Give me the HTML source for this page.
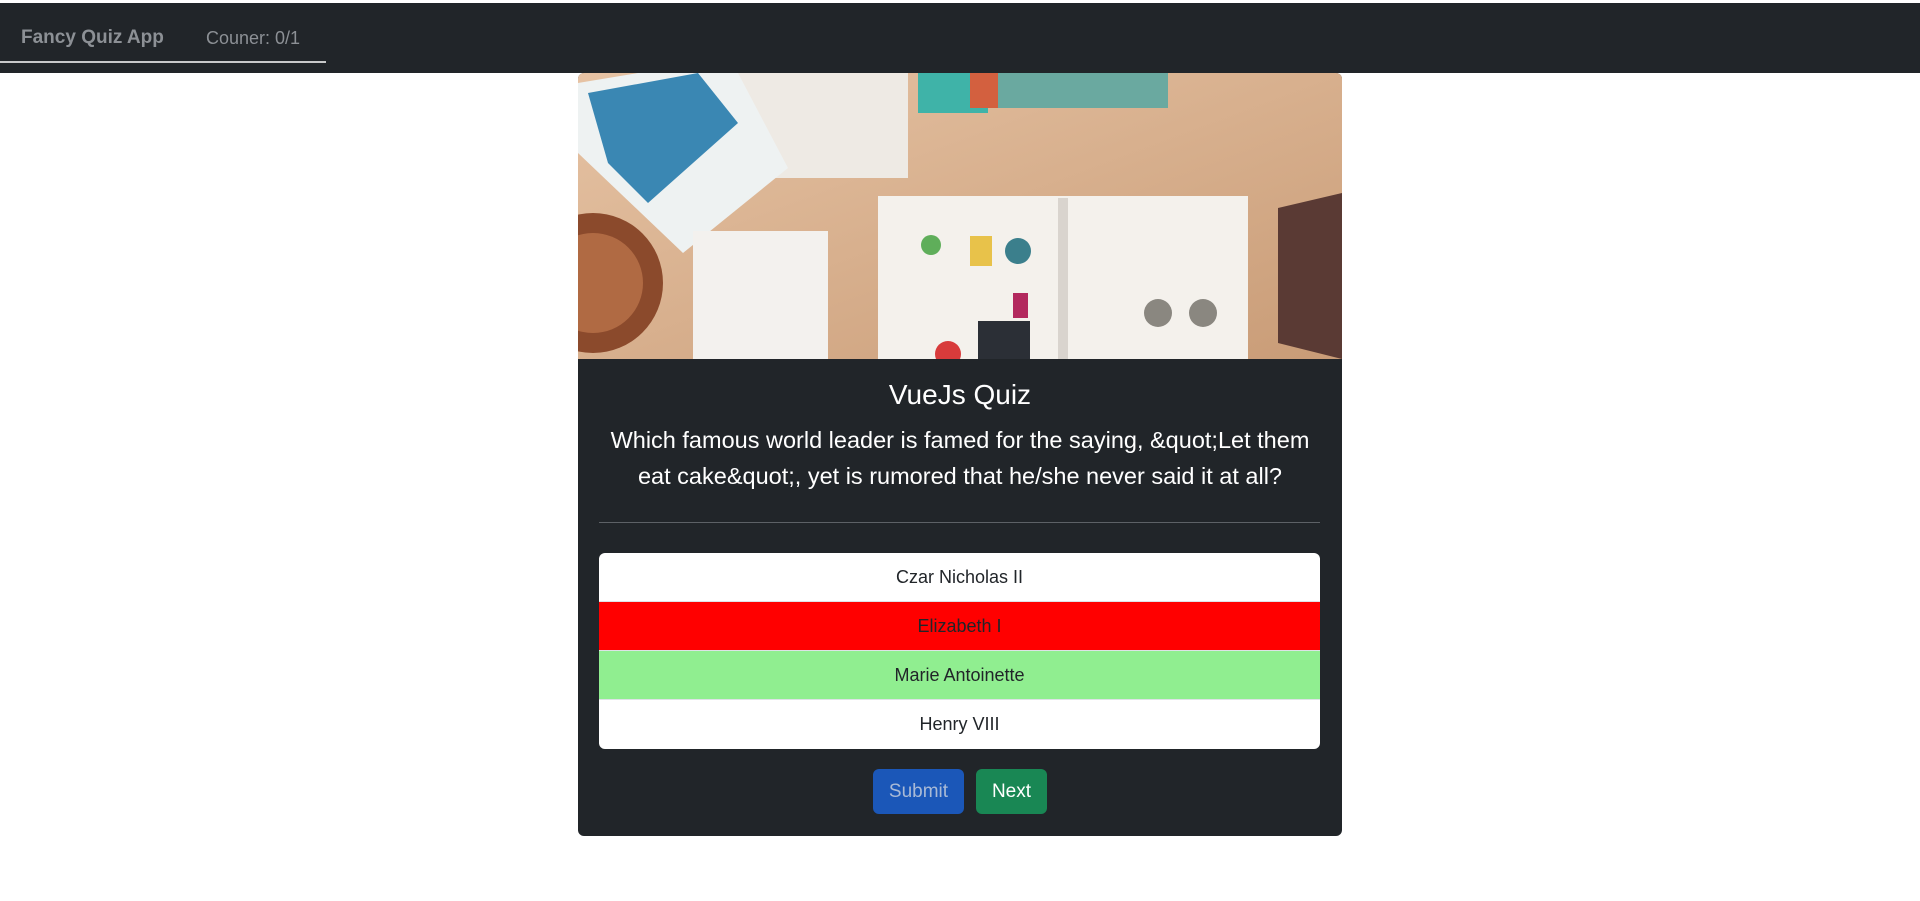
<!DOCTYPE html>
<html><head><meta charset="utf-8">
<style>
*{box-sizing:border-box;margin:0;padding:0}
body{width:1920px;height:901px;background:#fff;font-family:"Liberation Sans",Arial,sans-serif;position:relative;overflow:hidden}
.nav{position:absolute;left:0;top:3px;width:1920px;height:70px;background:#212529}
.brand{position:absolute;left:21px;top:24px;font-size:19px;font-weight:bold;color:#8c9095}
.cnt{position:absolute;left:206px;top:25px;font-size:18px;color:#8c9095}
.ul{position:absolute;left:0;top:58px;width:326px;height:2px;background:#c8c9ca}
.card{position:absolute;left:578px;top:73px;width:764px;height:763px;background:#212529;border-radius:6px;overflow:hidden}
.img{position:absolute;left:0;top:0;width:764px;height:286px}
.title{position:absolute;top:306px;width:100%;text-align:center;color:#fff;font-size:28px}
.q{position:absolute;top:349px;left:24px;right:24px;text-align:center;color:#fff;font-size:23.5px;line-height:36px}
.hr{position:absolute;left:21px;right:22px;top:449px;height:1px;background:#5d6166}
.list{position:absolute;left:21px;right:22px;top:480px;border-radius:6px;overflow:hidden}
.it{height:49px;line-height:49px;text-align:center;font-size:18px;color:#212529;background:#fff;border-bottom:1px solid #dee2e6}
.it:last-child{border-bottom:none}
.btn{position:absolute;top:696px;height:45px;line-height:45px;border-radius:6px;font-size:19px;text-align:center}
</style></head><body>
<div class="nav"><div class="brand">Fancy Quiz App</div><div class="cnt">Couner: 0/1</div><div class="ul"></div></div>
<div class="card">
<svg class="img" viewBox="0 0 764 286" preserveAspectRatio="none">
<defs><linearGradient id="w" x1="0" y1="0" x2="1" y2="1"><stop offset="0" stop-color="#e6c3a4"/><stop offset="1" stop-color="#c99c77"/></linearGradient></defs>
<rect width="764" height="286" fill="url(#w)"/>
<rect x="130" y="0" width="200" height="105" fill="#eeeae4"/>
<rect x="340" y="0" width="70" height="40" fill="#3fb3a8"/>
<rect x="392" y="0" width="40" height="35" fill="#d3603f"/>
<rect x="420" y="0" width="170" height="35" fill="#6aa9a0"/>
<polygon points="0,10 60,0 160,0 210,95 105,180 0,80" fill="#eef2f2"/>
<polygon points="10,20 120,0 160,50 70,130 30,90" fill="#3a87b3"/>
<rect x="300" y="123" width="370" height="163" fill="#f4f1ec"/>
<rect x="480" y="125" width="10" height="161" fill="#d9d4ce"/>
<circle cx="353" cy="172" r="10" fill="#5fae5a"/>
<rect x="392" y="163" width="22" height="30" fill="#e8c24a"/>
<circle cx="440" cy="178" r="13" fill="#3b7f8c"/>
<rect x="435" y="220" width="15" height="25" fill="#b3295e"/>
<rect x="400" y="248" width="52" height="38" fill="#2b2f36"/>
<rect x="115" y="158" width="135" height="128" fill="#f3f1ee"/>
<circle cx="15" cy="210" r="70" fill="#8b4a2c"/>
<circle cx="15" cy="210" r="50" fill="#b06a43"/>
<polygon points="700,135 764,120 764,286 700,270" fill="#5a3a34"/>
<circle cx="580" cy="240" r="14" fill="#8a8780"/>
<circle cx="625" cy="240" r="14" fill="#8a8780"/>
<circle cx="370" cy="281" r="13" fill="#d83b3b"/>
</svg>
<div class="title">VueJs Quiz</div>
<div class="q">Which famous world leader is famed for the saying, &amp;quot;Let them eat cake&amp;quot;, yet is rumored that he/she never said it at all?</div>
<div class="hr"></div>
<div class="list">
<div class="it">Czar Nicholas II</div>
<div class="it" style="background:#ff0000">Elizabeth I</div>
<div class="it" style="background:#90ee90">Marie Antoinette</div>
<div class="it">Henry VIII</div>
</div>
<div class="btn" style="left:295px;width:91px;background:#1b57b8;color:#a9bad6">Submit</div>
<div class="btn" style="left:398px;width:71px;background:#198754;color:#fff">Next</div>
</div>
</body></html>
